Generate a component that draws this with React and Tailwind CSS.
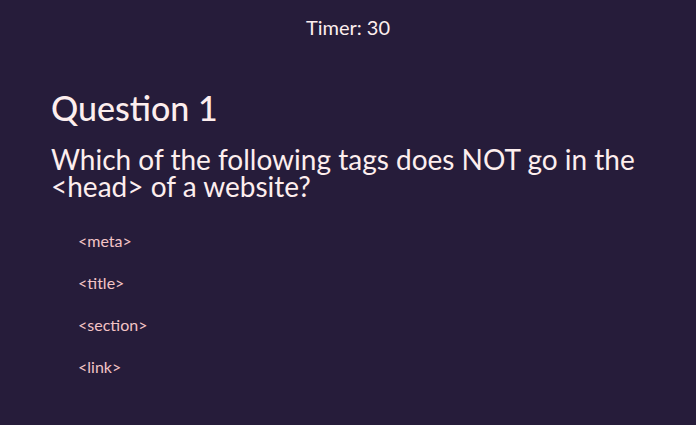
export default function App() {
    const options = ["<meta>", "<title>", "<section>", "<link>"];

    return (
        <div
            className="min-h-[425px] bg-[#261c3a] text-[#fdeeee]"
            style={{ fontFamily: "Lato, 'Open Sans', sans-serif" }}
        >
            <div className="pt-[15px] text-center text-[20px] leading-[24px]">Timer: 30</div>

            <div className="px-[51px] pt-[49px]">
                <h1 className="text-[34px] leading-[40px] font-medium">Question 1</h1>
                <p className="mt-[18px] text-[28px] leading-[27px]">
                    Which of the following tags does NOT go in the &lt;head&gt; of a website?
                </p>

                <ul className="mt-[31px] pl-[27px] flex flex-col gap-[22px]">
                    {options.map((o) => (
                        <li key={o} className="text-[16px] leading-[20px] text-[#f3c4c6]">
                            {o}
                        </li>
                    ))}
                </ul>
            </div>
        </div>
    );
}
